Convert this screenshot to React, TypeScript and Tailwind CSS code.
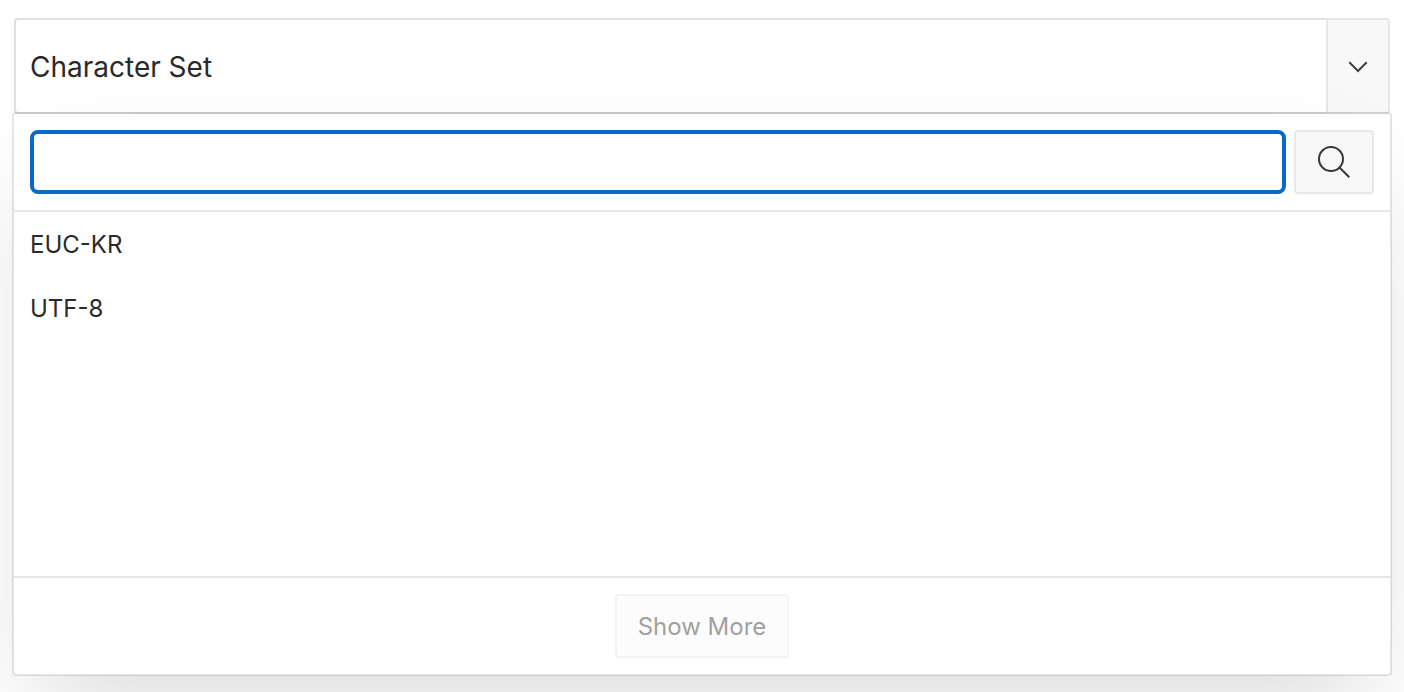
import { useState } from "react";

const options = ["EUC-KR", "UTF-8"];

function ChevronDown() {
  return (
    <svg width="20" height="12" viewBox="0 0 20 12" fill="none" stroke="#404040" strokeWidth="2" aria-hidden="true">
      <path d="M1.3 1.3 10 10 18.7 1.3" />
    </svg>
  );
}

function SearchIcon() {
  return (
    <svg width="32" height="32" viewBox="0 0 32 32" fill="none" stroke="#383838" strokeWidth="2" aria-hidden="true">
      <circle cx="13" cy="13" r="12" />
      <path d="M21.5 21.5 31.3 31.3" />
    </svg>
  );
}

export default function App() {
  const [query, setQuery] = useState("");
  const [selected, setSelected] = useState("");
  const visible = options.filter((o) => o.toLowerCase().includes(query.toLowerCase()));

  return (
    <main className="min-h-screen overflow-hidden bg-white px-3 pt-[18px] pb-4 font-['Inter',sans-serif] text-[#2a2a2a]">
      <div className="mx-0.5 flex h-24">
        <input
          type="text"
          readOnly
          aria-label="Character Set"
          placeholder="Character Set"
          value={selected}
          className="min-w-0 flex-1 rounded-l border-2 border-r-0 border-[#dfdfdf] bg-white px-3.5 pt-0.5 text-[28px] outline-none placeholder:text-[#2a2a2a]"
        />
        <button
          type="button"
          aria-label="Open list"
          className="flex w-16 items-center justify-center rounded-r border-2 border-[#e6e6e6] bg-[#f8f8f8] pt-0.5"
        >
          <ChevronDown />
        </button>
      </div>

      <section
        aria-label="Character Set values"
        className="relative -mt-0.5 rounded border-2 border-black/10 bg-white bg-clip-padding shadow-[0_50px_100px_-24px_rgba(0,0,0,0.15)]"
      >
        <form
          className="flex gap-2 border-b-2 border-[#e6e6e6] p-4"
          onSubmit={(e) => e.preventDefault()}
        >
          <input
            type="text"
            aria-label="Search"
            value={query}
            onChange={(e) => setQuery(e.target.value)}
            className="h-16 min-w-0 flex-1 rounded-lg border-4 border-[#056ac8] bg-white px-3 text-2xl outline-none"
          />
          <button
            type="submit"
            aria-label="Search"
            className="flex h-16 w-20 items-center justify-center rounded border-2 border-[#e8e8e8] bg-[#f8f8f8] shadow-[0_4px_4px_-2px_rgba(0,0,0,0.03)]"
          >
            <SearchIcon />
          </button>
        </form>

        <ul className="min-h-[364px]">
          {visible.map((option) => (
            <li key={option}>
              <button
                type="button"
                onClick={() => setSelected(option)}
                className="flex h-16 w-full items-center px-4 pt-0.5 text-2xl"
              >
                {option}
              </button>
            </li>
          ))}
        </ul>

        <footer className="flex justify-center border-t-2 border-[#e6e6e6] p-4">
          <button
            type="button"
            disabled
            className="h-16 rounded border-2 border-[#f3f3f3] bg-[#fcfcfc] px-[21px] pt-0.5 text-2xl text-[#a0a0a0] shadow-[0_4px_4px_-2px_rgba(0,0,0,0.02)]"
          >
            Show More
          </button>
        </footer>
      </section>
    </main>
  );
}
